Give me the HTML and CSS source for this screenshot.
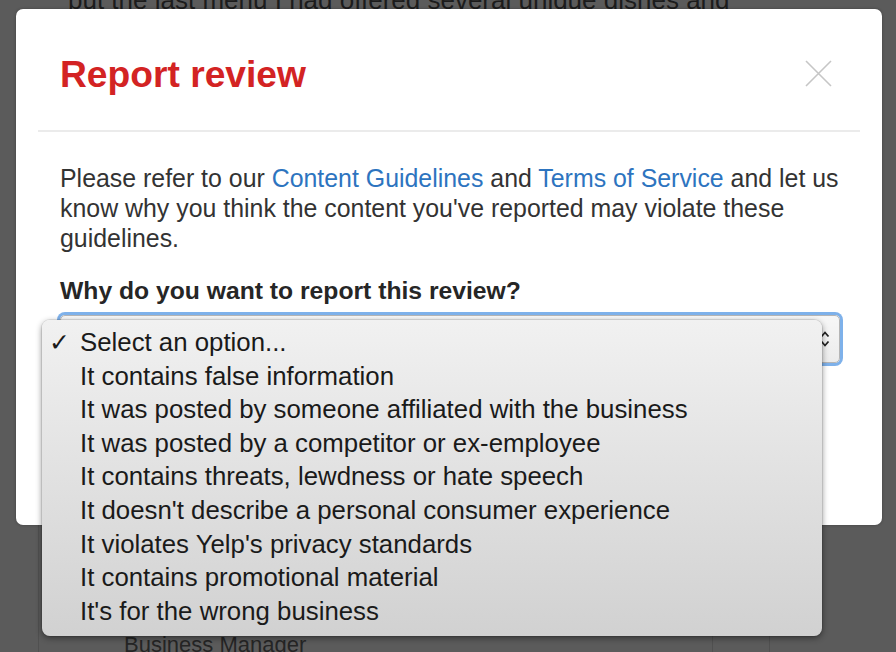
FILE: index.html
```html
<!DOCTYPE html>
<html>
<head>
<meta charset="utf-8">
<link rel="stylesheet" href="styles.css">
</head>
<body>
<div class="page">
  <p class="page-text">but the last menu I had offered several unique dishes and</p>
  <div class="page-box">
    <div class="page-main"><span class="page-label">Business Manager</span></div>
    <div class="page-side"></div>
  </div>
</div>

<div class="modal">
  <div class="modal-header">
    <h1 class="modal-title">Report review</h1>
    <svg class="close" width="27" height="27" viewBox="0 0 27 27"><path d="M1 1L26 26M26 1L1 26" stroke="#c6c6c6" stroke-width="1.6" fill="none"/></svg>
  </div>
  <div class="divider"></div>
  <div class="modal-body">
    <p class="intro">Please refer to our <a class="link">Content Guidelines</a> and <a class="link">Terms of Service</a> and let us know why you think the content you've reported may violate these guidelines.</p>
    <div class="label">Why do you want to report this review?</div>
    <div class="select">
      <span class="select-text">Select an option...</span>
      <svg class="arrows" width="10" height="18" viewBox="0 0 10 18"><path d="M1.5 6.5L5 2.5L8.5 6.5M1.5 11.5L5 15.5L8.5 11.5" stroke="#222" stroke-width="1.8" fill="none"/></svg>
    </div>
  </div>
  <ul class="menu">
    <li class="item selected"><span class="check">✓</span>Select an option...</li>
    <li class="item">It contains false information</li>
    <li class="item">It was posted by someone affiliated with the business</li>
    <li class="item">It was posted by a competitor or ex-employee</li>
    <li class="item">It contains threats, lewdness or hate speech</li>
    <li class="item">It doesn't describe a personal consumer experience</li>
    <li class="item">It violates Yelp's privacy standards</li>
    <li class="item">It contains promotional material</li>
    <li class="item">It's for the wrong business</li>
  </ul>
</div>
</body>
</html>
```

FILE: styles.css
```css
html, body {
  margin: 0;
  padding: 0;
  width: 896px;
  height: 652px;
  overflow: hidden;
  background: #5b5b5b;
  font-family: "Liberation Sans", Arial, sans-serif;
}
.page {
  position: relative;
  height: 652px;
}
.page-text {
  margin: -15px 0 0 68px;
  font-size: 26px;
  line-height: 30px;
  color: #1c1c1c;
  white-space: nowrap;
}
.page-box {
  margin: 495px 0 0 38px;
  width: 730px;
  height: 160px;
  border-left: 1px solid #505050;
  border-right: 1px solid #505050;
  display: flex;
}
.page-main {
  width: 674px;
  border-right: 1px solid #505050;
  padding: 122px 0 0 85px;
  box-sizing: border-box;
}
.page-label {
  font-size: 22px;
  color: #252525;
}
.modal {
  position: absolute;
  left: 16px;
  top: 9px;
  width: 866px;
  height: 516px;
  background: #fff;
  border-radius: 7px;
  box-shadow: 0 0 3px rgba(0,0,0,0.3);
}
.modal-header {
  display: flex;
  justify-content: space-between;
  align-items: flex-start;
  padding: 43px 50px 34px 44px;
}
.modal-title {
  margin: 0;
  font-size: 37.2px;
  line-height: 44px;
  font-weight: bold;
  color: #d32323;
}
.close {
  margin-top: 8px;
}
.divider {
  margin: 0 22px;
  border-top: 2px solid #ebebeb;
}
.modal-body {
  padding: 31px 42px 0 44px;
}
.intro {
  margin: 0;
  font-size: 24.9px;
  line-height: 30px;
  color: #333;
}
.link {
  color: #2d74bf;
  text-decoration: none;
}
.label {
  margin-top: 23px;
  font-size: 24.7px;
  line-height: 30px;
  font-weight: bold;
  color: #262626;
}
.select {
  margin-top: 9px;
  height: 46px;
  border: 1px solid #b5b5b5;
  border-radius: 5px;
  background: linear-gradient(#f7f7f7, #ececec);
  box-shadow: 0 0 0 3px #7eb1ea;
  display: flex;
  align-items: center;
  justify-content: space-between;
  padding: 0 9px 0 14px;
  font-size: 24px;
  color: #222;
}
.menu {
  position: absolute;
  left: 26px;
  top: 311px;
  width: 780px;
  height: 316px;
  box-sizing: border-box;
  margin: 0;
  padding: 6px 0 8px;
  list-style: none;
  border-radius: 8px;
  background: linear-gradient(#f1f1f1, #d1d1d1);
  box-shadow: 0 2px 6px rgba(0,0,0,0.45), 0 0 0 1px rgba(0,0,0,0.08);
}
.item {
  position: relative;
  height: 33.6px;
  line-height: 33.6px;
  padding-left: 38px;
  font-size: 25.8px;
  color: #1a1a1a;
  white-space: nowrap;
}
.check {
  position: absolute;
  left: 7px;
  font-family: "DejaVu Sans", sans-serif;
  font-size: 25px;
}
```
